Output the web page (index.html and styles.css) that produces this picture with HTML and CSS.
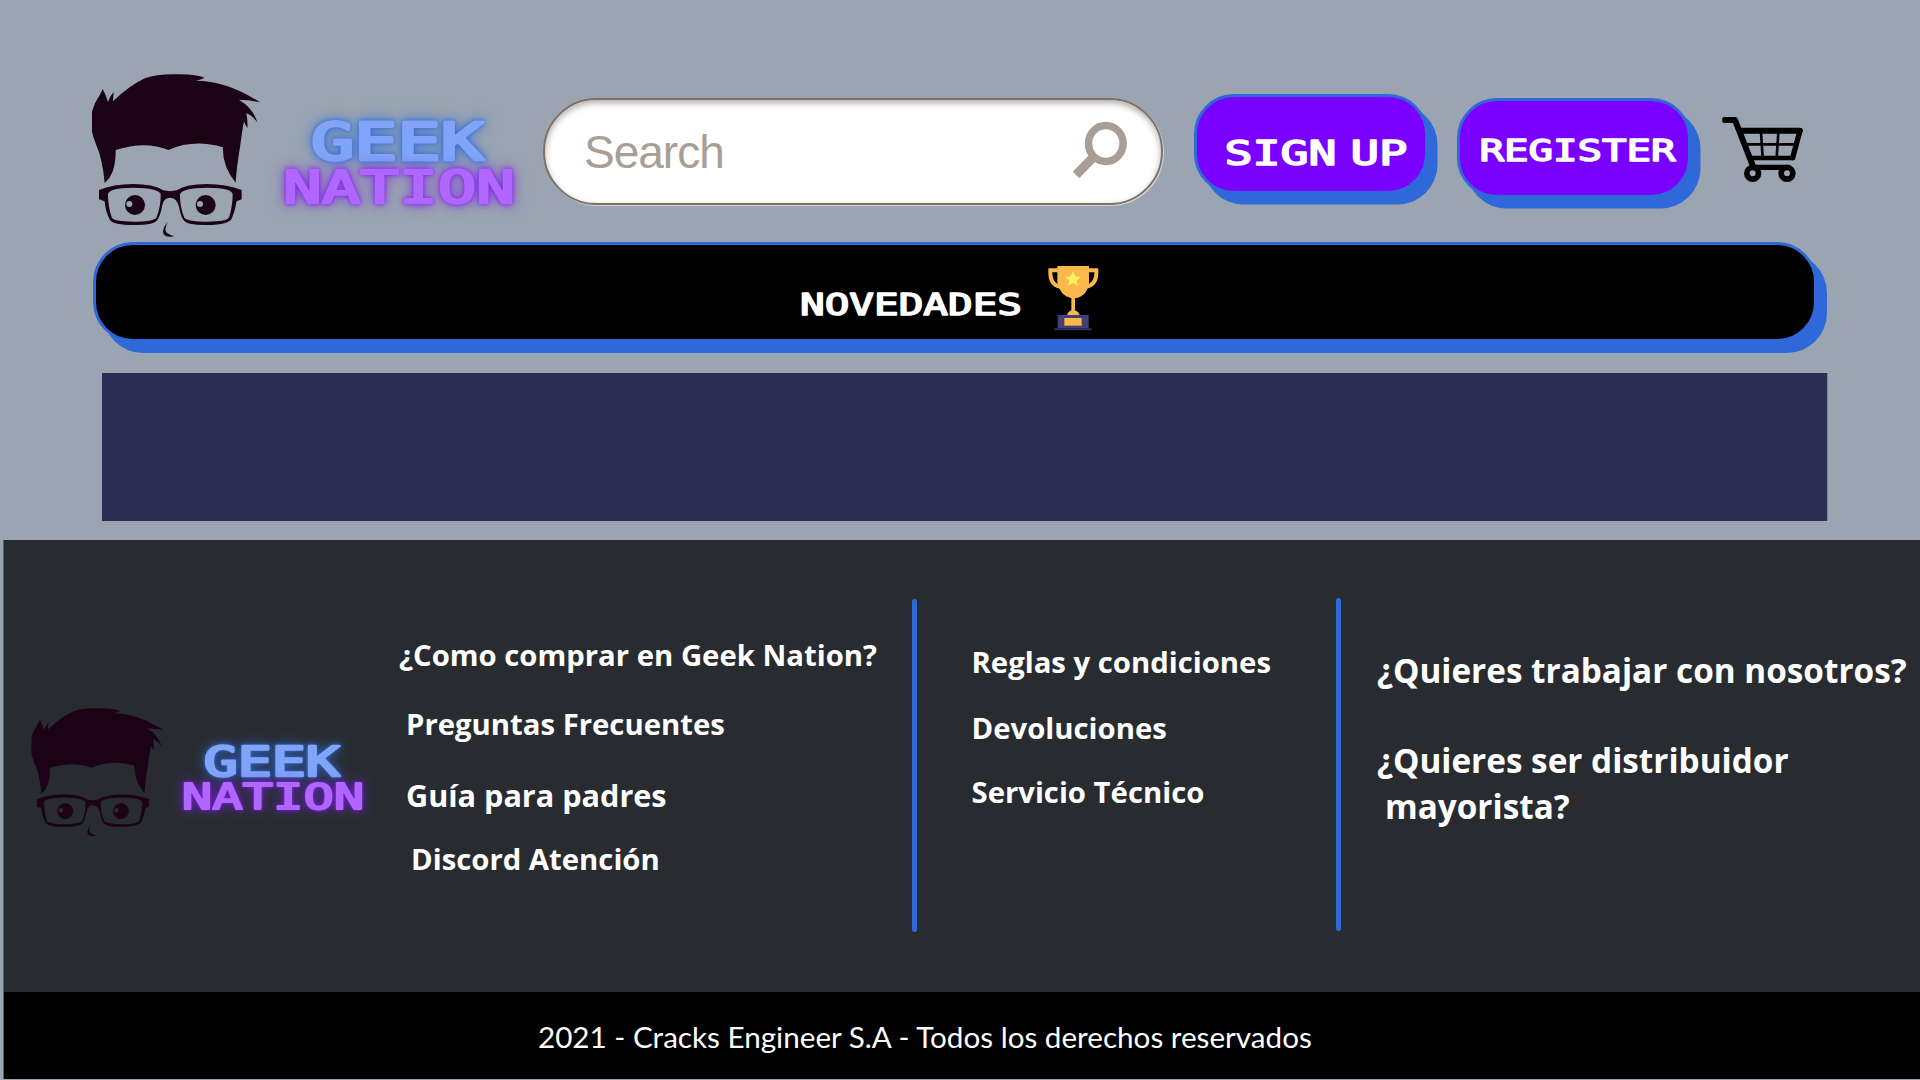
FILE: index.html
```html
<!DOCTYPE html>
<html lang="es">
<head>
<meta charset="utf-8">
<title>Geek Nation</title>
<link rel="stylesheet" href="styles.css">
</head>
<body>
<svg class="defs" width="0" height="0">
  <symbol id="face" viewBox="0 0 600 570">
    <path d="M36 155Q45 125 58 108L68 87Q78 105 84 126Q90 108 101 96L99 124Q150 75 195 55Q235 40 300 43Q350 44 374 53Q362 59 348 62Q440 62 540 127Q510 120 477 119Q520 145 532 187Q515 165 499 160Q504 185 502 205L492 185Q488 200 480 262Q470 320 467 368Q426 318 429 262Q340 236 266 270Q195 242 107 270Q108 342 74 369Q68 300 50 258Q38 228 36 214Z"/>
    <path fill-rule="evenodd" d="M57 390Q100 372 160 372Q220 372 250 391Q270 396 290 391Q320 372 380 372Q440 372 485 390V418L470 424Q466 450 456 474Q448 495 380 495Q325 496 312 482Q302 470 297 440Q290 413 270 413Q252 413 247 435Q241 470 230 482Q218 496 160 495Q100 495 90 480Q76 455 74 424L57 418ZM84 403Q84 384 160 383Q236 384 242 402Q243 440 229 473Q218 485 160 485Q100 485 95 472Q84 440 84 403ZM458 403Q458 384 382 383Q306 384 300 402Q299 440 313 473Q324 485 382 485Q442 485 447 472Q458 440 458 403Z"/>
    <path fill-rule="evenodd" d="M135 435a30 30 0 1 0 60 0a30 30 0 1 0-60 0ZM139 432a9 9 0 1 0 18 0a9 9 0 1 0-18 0ZM347 435a30 30 0 1 0 60 0a30 30 0 1 0-60 0ZM351 432a9 9 0 1 0 18 0a9 9 0 1 0-18 0Z"/>
    <path d="M263 486Q252 508 259 517Q266 525 284 529Q250 534 249 516Q250 500 263 486Z"/>
  </symbol>
</svg>

<header class="header">
  <svg class="logo" viewBox="0 0 460 190" role="img" aria-label="Geek Nation">
    <use href="#face" class="logo-face" width="200" height="190"/>
    <text class="logo-geek" x="231" y="100" textLength="173" lengthAdjust="spacingAndGlyphs">GEEK</text>
    <text class="logo-nation" x="203" y="142.500" textLength="232" lengthAdjust="spacingAndGlyphs">NATION</text>
  </svg>
  <div class="search">
    <span class="search-label">Search</span>
    <svg class="search-icon" width="58" height="60" viewBox="0 0 58 60">
      <ellipse cx="36.800" cy="23.500" rx="17.300" ry="18"/>
      <path d="M24.500 37L7 55"/>
    </svg>
  </div>
  <a class="pill signup">
    <svg width="227" height="93" viewBox="0 0 227 93">
      <text class="display" font-size="33.500" stroke-width="1.600" y="68"><tspan x="27.500" textLength="112" lengthAdjust="spacingAndGlyphs">SIGN</tspan><tspan x="153.500" textLength="57" lengthAdjust="spacingAndGlyphs">UP</tspan></text>
    </svg>
  </a>
  <a class="pill register">
    <svg width="227" height="93" viewBox="0 0 227 93">
      <text class="display" font-size="29.300" stroke-width="1.500" x="19.500" y="60" textLength="196" lengthAdjust="spacingAndGlyphs">REGISTER</text>
    </svg>
  </a>
  <svg class="cart" viewBox="840 100 260 215">
    <path stroke-width="18" d="M855 118H885L938 254M905 150H1079"/>
    <path stroke-width="16" d="M1080 150L1058 231M938 260H1046"/>
    <path stroke-width="14" d="M930 232H1058"/>
    <path stroke-width="8" d="M963 155L968 232M1015 155L1010 232M915 191H1068"/>
    <circle stroke-width="17" cx="938" cy="278" r="17.500"/>
    <circle stroke-width="17" cx="1041" cy="278" r="17.500"/>
  </svg>
</header>

<nav class="news">
  <svg class="news-title" width="226" height="30" viewBox="0 0 226 30">
    <text class="display" font-size="29.300" stroke-width="1.500" x="0" y="24.500" textLength="222" lengthAdjust="spacingAndGlyphs">NOVEDADES</text>
  </svg>
  <svg class="trophy" viewBox="800 74 158 200">
    <path class="gold-line" d="M834 90H810Q808 134 840 139M922 90H948Q950 134 917 139"/>
    <path class="gold" d="M831 77H926V125Q922 168 884 174V210Q896 215 898 225H860Q862 215 873 210V174Q838 166 831 125Z"/>
    <path class="star" d="M878 92L885 108L902 110L889 121L893 137L878 128L863 137L867 121L854 110L871 108Z"/>
    <path class="base" d="M832 224H925V264H832Z"/>
    <path class="foot" d="M822 264H934V270H822Z"/>
    <path class="gold" d="M852 233H904V256H852Z"/>
  </svg>
</nav>

<main class="panel"></main>

<footer class="footer">
  <div class="footer-main">
    <svg class="footer-logo" viewBox="0 0 460 190" role="img" aria-label="Geek Nation">
      <use href="#face" class="logo-face" width="200" height="190"/>
      <text class="logo-geek" x="231" y="100" textLength="173" lengthAdjust="spacingAndGlyphs">GEEK</text>
      <text class="logo-nation" x="203" y="142.500" textLength="232" lengthAdjust="spacingAndGlyphs">NATION</text>
    </svg>
    <ul class="links help">
      <li class="buy">¿Como comprar en Geek Nation?</li>
      <li class="faq">Preguntas Frecuentes</li>
      <li class="guide">Guía para padres</li>
      <li class="discord">Discord Atención</li>
    </ul>
    <div class="divider"></div>
    <ul class="links rules">
      <li>Reglas y condiciones</li>
      <li class="returns">Devoluciones</li>
      <li>Servicio Técnico</li>
    </ul>
    <div class="divider divider-high"></div>
    <ul class="links work">
      <li>¿Quieres trabajar con nosotros?</li>
      <li>¿Quieres ser distribuidor<br><span class="indent">mayorista?</span></li>
    </ul>
  </div>
  <div class="copyright">2021 - Cracks Engineer S.A - Todos los derechos reservados</div>
</footer>
</body>
</html>
```
FILE: styles.css
```css
* { box-sizing: border-box; }

body {
  margin: 0;
  width: 1920px;
  height: 1080px;
  overflow: hidden;
  background: #9aa5b1;
  font-family: "Open Sans", sans-serif;
  color: #fff;
}

svg { display: block; flex: none; overflow: visible; }
.defs { position: absolute; }

.header {
  display: flex;
  align-items: flex-start;
  height: 242px;
  padding: 60px 0 0 80px;
}

.logo { width: 460px; height: 190px; }
.logo-face { fill: #1b0217; }
.logo-geek, .logo-nation, .display {
  font-family: "DejaVu Sans Mono", monospace;
  font-weight: 400;
  stroke-linejoin: round;
}
.logo-geek {
  font-size: 51.500px;
  fill: #80a5f8;
  stroke: #80a5f8;
  stroke-width: 3.200px;
  filter: drop-shadow(0 0 2px #2f69d9) drop-shadow(0 0 7px rgba(47, 105, 217, .75));
}
.logo-nation {
  font-size: 45px;
  fill: #b066ff;
  stroke: #b066ff;
  stroke-width: 2.400px;
  filter: drop-shadow(0 0 2px #7d1fe8) drop-shadow(0 0 7px rgba(125, 31, 232, .7));
}
.display { fill: #fff; stroke: #fff; }

.search {
  display: flex;
  flex: none;
  justify-content: space-between;
  width: 620px;
  height: 107px;
  margin: 37.500px 1px 0 3px;
  padding: 20px 34px 0 39px;
  border: 2px solid #7d7067;
  border-radius: 54px;
  background: #fff;
  box-shadow: inset 0 3px 6px rgba(60, 50, 45, .4), 1px 1px 0 #d3d8dc;
}
.search-label {
  padding-top: 2px;
  font: 46px/60px "Liberation Sans", Arial, sans-serif;
  letter-spacing: -1px;
  color: #a99e95;
}
.search-icon { fill: none; stroke: #a99e95; stroke-width: 7.5; }
.search-icon path { stroke-width: 9; }

.pill {
  flex: none;
  width: 234px;
  height: 100px;
  border: 3.500px solid #2f69d9;
  border-radius: 40px;
  background: #7a00ff;
  box-shadow: 9.500px 10.500px 0 #2f69d9;
}
.signup { margin: 34px 0 0 30px; }
.register { margin: 38px 0 0 29px; }

.cart {
  width: 86.700px;
  height: 71.700px;
  margin: 53.800px 0 0 29px;
  fill: none;
  stroke: #000;
  stroke-linecap: round;
  stroke-linejoin: round;
}

.news {
  display: flex;
  width: 1724px;
  height: 100px;
  margin-left: 93px;
  padding-left: 703px;
  border: 3.500px solid #2f69d9;
  border-radius: 40px;
  background: #000;
  box-shadow: 10px 11px 0 #2f69d9;
}
.news-title { margin: 45px 0 0 1px; }
.trophy { width: 52.700px; height: 66.700px; margin: 20px 0 0 20.700px; }
.gold { fill: #fbb84c; }
.gold-line { fill: none; stroke: #fbb84c; stroke-width: 12; }
.star { fill: #fff063; }
.base { fill: #414177; }
.foot { fill: #30305a; }

.panel {
  width: 1726px;
  height: 148px;
  margin: 31px 0 19px 102px;
  background: #2d2e53;
  border-right: 1px solid #7f86a0;
}

.footer {
  height: 539px;
  margin-left: 3px;
  border-left: 1px solid #586069;
}
.footer-main {
  display: flex;
  height: 452px;
  background: #282c31;
}
.footer-logo { width: 362px; height: 149.500px; margin: 157px 0 0 18px; }

.divider {
  flex: none;
  width: 5px;
  height: 333px;
  margin-top: 59px;
  border-radius: 2.500px;
  background: #2f69d9;
}
.divider-high { margin-top: 58px; }

.links {
  flex: none;
  margin: 0;
  padding: 0;
  list-style: none;
  font-size: 29.300px;
  font-weight: 700;
  line-height: 40px;
  white-space: nowrap;
}
.help {
  width: 528px;
  padding: 95px 0 0 15px;
}
.buy { margin-bottom: 29px; }
.faq { margin: 0 0 31px 7px; }
.guide { margin: 0 0 24px 7px; font-size: 30.600px; }
.discord { margin-left: 12px; }
.rules {
  width: 419px;
  padding: 102px 0 0 54.500px;
}
.rules li { margin-bottom: 26px; }
.rules .returns { margin-bottom: 24px; }
.work {
  padding: 107px 0 0 36px;
  font-size: 33.300px;
  line-height: 46px;
}
.work li { margin-bottom: 44px; }
.indent { margin-left: 8px; }

.copyright {
  height: 87px;
  padding: 25px 0 0 534px;
  background: #000;
  font: 29.640px/40px Lato, sans-serif;
  white-space: nowrap;
}
```
